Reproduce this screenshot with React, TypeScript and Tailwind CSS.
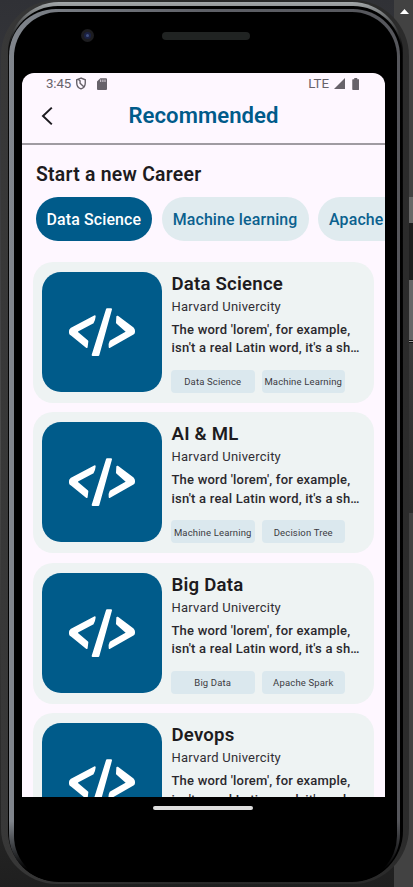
const categories = ["Data Science", "Machine learning", "Apache"];

const chipStyles = [
  "bg-[#005b8a] px-[11px] text-white",
  "bg-[#e0ebef] px-[11px] text-[#0b618e]",
  "bg-[#e0ebef] pr-[50px] pl-[11px] text-[#0b618e]",
];

const courses = [
  { title: "Data Science", tags: ["Data Science", "Machine Learning"] },
  { title: "AI & ML", tags: ["Machine Learning", "Decision Tree"] },
  { title: "Big Data", tags: ["Big Data", "Apache Spark"] },
  { title: "Devops", tags: [] },
];

function CodeIcon() {
  return (
    <svg viewBox="36 35 360 360" className="size-full" fill="#fff" stroke="#fff" strokeWidth="6" strokeLinejoin="round">
      <path d="M194 168 L123 206 Q120 208 120 212 L120 217 Q120 220 123 222 L170 260 L172 243 L142 217 Q139 213 144 210 L188 187 Q193 179 194 168 Z" />
      <path d="M231 147 H243 L205 284 H188 Z" />
      <path d="M262 169 L309 204 Q312 207 312 211 V215 Q312 218 309 220 L239 260 Q237 252 242 243 L288 217 Q292 214 288 211 L261 187 Z" />
    </svg>
  );
}

function StatusBar() {
  return (
    <div className="flex h-[21px] shrink-0 items-center pr-[26px] pl-[24px] text-[13.3px] leading-none text-[#67626a]">
      <span className="tracking-[-0.1px]">3:45</span>
      <svg viewBox="0 0 12 14" className="ml-[4px] h-[13px] w-[12px]" fill="none" stroke="#67626a" strokeWidth="1.5">
        <path d="M6 1.2 L1.4 3 V6.5 C1.4 9.5 3.4 12 6 12.8 C8.6 12 10.6 9.5 10.6 6.5 V3 Z" />
        <path d="M3 2.5 L5 4.2 V6.6 L9 10.6" />
      </svg>
      <svg viewBox="0 0 10 12" className="ml-[10px] h-[12px] w-[10px]">
        <path d="M3.3 0.2 H9 Q10 0.2 10 1.2 V11 Q10 12 9 12 H1 Q0 12 0 11 V3.5 Z" fill="#67626a" />
        <path d="M3.7 1.5 V4 M5.9 1.5 V4 M8 1.5 V4" stroke="#e8e1eb" strokeWidth="0.9" />
      </svg>
      <span className="ml-auto text-[13.3px]">LTE</span>
      <svg viewBox="0 0 11 11" className="ml-[4.5px] h-[11px] w-[11px]">
        <path d="M11 0 V11 H0 Z" fill="#67626a" />
      </svg>
      <svg viewBox="0 0 7 12" className="ml-[7px] h-[12px] w-[7.5px]">
        <path d="M2 0 H5 V1.2 H6.3 Q7 1.2 7 2 V11.2 Q7 12 6.3 12 H0.7 Q0 12 0 11.2 V2 Q0 1.2 0.7 1.2 H2 Z" fill="#67626a" />
      </svg>
    </div>
  );
}

function CourseCard({ title, tags }: { title: string; tags: string[] }) {
  return (
    <article className="flex h-[141px] shrink-0 rounded-[20px] bg-[#eef3f3] pt-[10px] pl-[9px]">
      <div className="size-[120px] shrink-0 overflow-hidden rounded-[19px] bg-[#005b8a]">
        <CodeIcon />
      </div>
      <div className="ml-[9.5px] w-[196px]">
        <h3 className="mt-px text-[18.6px] leading-[22px] font-semibold tracking-[0.22px] text-[#1d1b20]">{title}</h3>
        <p className="mt-[3px] text-[13px] leading-[18px] tracking-[0.22px] text-[#302e33]">Harvard Univercity</p>
        <p className="mt-[5px] text-[13px] leading-[18.8px] font-medium tracking-[0.2px] whitespace-nowrap text-[#2a282d]">
          The word 'lorem', for example,
          <br />
          isn't a real Latin word, it's a sh…
        </p>
        <div className="mt-[11.6px] -ml-[0.5px] flex gap-[7px]">
          {tags.map((tag) => (
            <span
              key={tag}
              className="flex h-[23px] w-[83.5px] items-center justify-center rounded-[4px] bg-[#dbe8ee] pt-[2px] text-[9.5px] tracking-[0.15px] whitespace-nowrap text-[#3b3b42]"
            >
              {tag}
            </span>
          ))}
        </div>
      </div>
    </article>
  );
}

function Screen() {
  return (
    <main className="flex h-[724px] w-[363px] flex-col overflow-hidden rounded-t-[12px] bg-[#fef7ff]">
      <StatusBar />
      <header className="grid h-[51px] shrink-0 grid-cols-[46px_1fr_46px] items-center border-b-2 border-[#a09ba2]">
        <svg viewBox="0 0 12 20" className="-mt-[6px] ml-[19px] h-[20px] w-[12px]" fill="none" stroke="#1d1b20" strokeWidth="2">
          <path d="M10.8 1.6 L2 10 L10.8 18.4" />
        </svg>
        <h1 className="-mt-[7px] text-center text-[22.1px] leading-[26px] font-semibold tracking-[0.08px] text-[#005b8a]">Recommended</h1>
      </header>
      <h2 className="mt-[18px] ml-[14px] text-[19.4px] leading-[24px] font-semibold tracking-[0.25px] text-[#1d1b20]">Start a new Career</h2>
      <nav className="mt-[10px] ml-[13.5px] flex shrink-0 gap-[9.5px]">
        {categories.map((name, i) => (
          <button
            key={name}
            className={`h-[44px] shrink-0 rounded-full pt-px text-[15.9px] font-medium tracking-[0.15px] whitespace-nowrap ${chipStyles[i]}`}
          >
            {name}
          </button>
        ))}
      </nav>
      <section className="mt-[20.5px] mr-[11px] ml-[11px] flex flex-col gap-[9.6px]">
        {courses.map((course) => (
          <CourseCard key={course.title} {...course} />
        ))}
      </section>
    </main>
  );
}

export default function App() {
  return (
    <div className="relative h-[887px] w-[413px] overflow-hidden bg-linear-to-b from-[#303136] via-[#4a4a4a] to-[#1f1f1f] font-[Roboto,sans-serif]">
      <div className="absolute top-0 right-0 flex h-full w-[19px] flex-col bg-[#424242]">
        <svg viewBox="0 0 9 5" className="mt-[9px] ml-[6px] h-[5px] w-[9px]">
          <path d="M4.5 0 L9 5 H0 Z" fill="#fff" />
        </svg>
        <div className="mt-[183px] h-[26px] bg-[#686868]" />
        <div className="h-[57px] bg-[#1e1e1e]" />
        <div className="h-[60px] bg-[#666]" />
        <div className="h-[3px] border-y border-[#111] bg-[#999]" />
        <div className="h-[170px] bg-linear-to-b from-[#3a3a3a] to-[#2c2c2c]" />
      </div>
      <div className="relative ml-px h-[884px] w-[408px] rounded-[56px] bg-linear-to-r from-[#383838] via-[#282828] to-[#2b2b2b] pt-[2px] pr-[6px] pb-[2px] pl-[7px]">
        <div className="h-full rounded-[51px] bg-linear-to-b from-[#a4a8aa] from-0% via-[#0a0a0a] via-5% to-black px-px pt-[4px] pb-px">
          <div className="h-full rounded-[49px] bg-black pt-[3px] pr-[2px]">
            <div className="h-full rounded-[47px] bg-[linear-gradient(to_top,#000_0px,#000_12px,transparent_60px),linear-gradient(to_right,#80858c,#5e6067_50%,#55565b)] pt-[3px] pr-[3px] pl-[5px]">
              <div className="flex h-full flex-col rounded-[45px] bg-black pl-[8px]">
                <div className="flex h-[61px] shrink-0 items-start">
                  <div className="mt-[17px] ml-[59px] flex size-[13px] items-center justify-center rounded-full bg-[#1d1d20]">
                    <div className="flex size-[7px] items-center justify-center rounded-full bg-[#1b2142]">
                      <div className="size-[3px] rounded-full bg-[#405080]" />
                    </div>
                  </div>
                  <div className="mt-[20px] ml-[68px] h-[8px] w-[88px] rounded-full bg-[#202322]" />
                </div>
                <Screen />
                <div className="mt-[9px] ml-[131px] h-[4px] w-[100px] shrink-0 rounded-full bg-[#dedede]" />
              </div>
            </div>
          </div>
        </div>
      </div>
    </div>
  );
}
